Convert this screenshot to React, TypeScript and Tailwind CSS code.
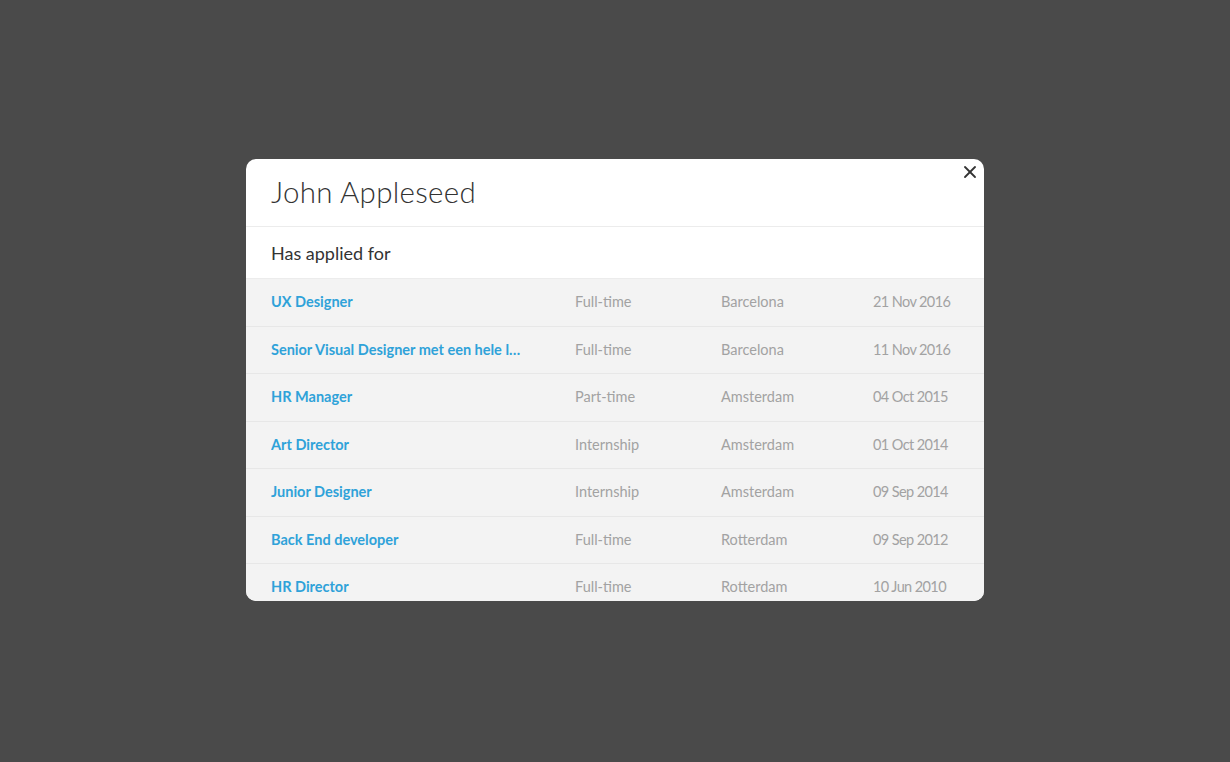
import { X } from "lucide-react";

const jobs = [
  { title: "UX Designer", type: "Full-time", city: "Barcelona", date: "21 Nov 2016" },
  { title: "Senior Visual Designer met een hele lange titel", type: "Full-time", city: "Barcelona", date: "11 Nov 2016" },
  { title: "HR Manager", type: "Part-time", city: "Amsterdam", date: "04 Oct 2015" },
  { title: "Art Director", type: "Internship", city: "Amsterdam", date: "01 Oct 2014" },
  { title: "Junior Designer", type: "Internship", city: "Amsterdam", date: "09 Sep 2014" },
  { title: "Back End developer", type: "Full-time", city: "Rotterdam", date: "09 Sep 2012" },
  { title: "HR Director", type: "Full-time", city: "Rotterdam", date: "10 Jun 2010" },
];

export default function App() {
  return (
    <main className="h-screen w-full flex items-center justify-center bg-[#4a4a4a] font-['Lato',sans-serif]">
      <div className="relative w-[738px] h-[442px] mb-[2px] bg-white rounded-[10px] overflow-hidden">
        <button className="absolute top-[3px] right-[4px] text-[#333]">
          <X size={20} strokeWidth={2.2} />
        </button>

        <div className="h-[68px] border-b border-[#ececec] pl-[25px] flex items-center">
          <h1 className="text-[29.5px] text-[#333] font-light tracking-[0.3px]">
            John Appleseed
          </h1>
        </div>

        <div className="h-[52px] pl-[25px] flex items-center border-b border-[#ececec]">
          <h2 className="text-[18px] text-[#333] mt-[1px]">Has applied for</h2>
        </div>

        <div className="bg-[#f3f3f3]">
          {jobs.map((job) => (
            <div
              key={job.title}
              className="h-[47.5px] grid grid-cols-[304px_146px_152px_1fr] items-center pl-[25px] border-b border-[#e7e7e7] text-[14.5px]"
            >
              <span className="font-bold text-[#2fa2d9] truncate pr-[50px]">
                {job.title}
              </span>
              <span className="text-[#a2a2a2]">{job.type}</span>
              <span className="text-[#a2a2a2]">{job.city}</span>
              <span className="text-[#a2a2a2] tracking-[-0.6px]">{job.date}</span>
            </div>
          ))}
        </div>
      </div>
    </main>
  );
}
